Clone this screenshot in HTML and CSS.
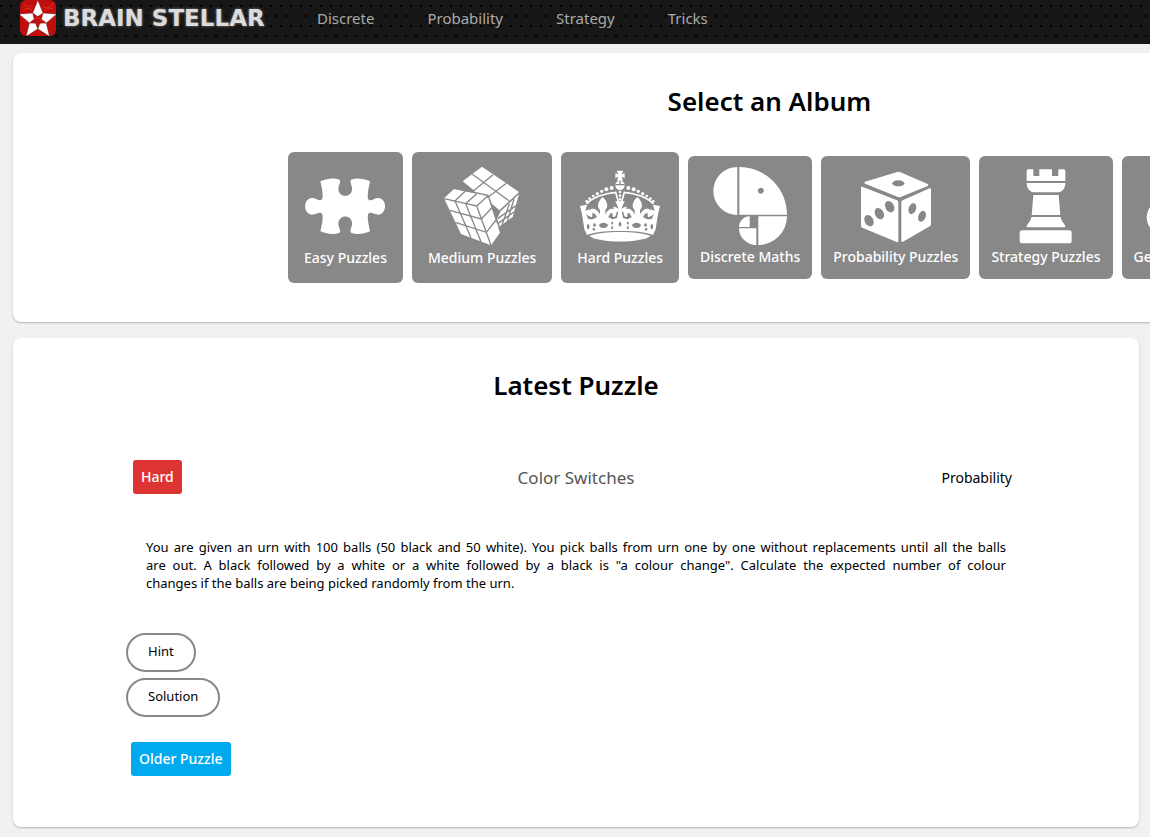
FILE: index.html
```html
<!DOCTYPE html>
<html lang="en">
<head>
    <meta charset="UTF-8">
    <meta name="viewport" content="width=device-width, initial-scale=1.0">
    <title>Brain Stellar</title>
    <link rel="stylesheet" href="styles.css">
</head>
<body>
    <header class="topbar">
        <a href="#" class="logo">
            <svg class="logo-icon" viewBox="60 3 105 105" aria-hidden="true">
                <rect x="60" y="3" width="105" height="105" rx="18" fill="#c00d0d"/>
                <path d="M72 14Q84 30 96 18M128 20Q140 34 158 14M70 32Q84 22 96 34M130 34Q146 22 156 30M100 60Q112 50 124 62T112 76" fill="none" stroke="#e32a20" stroke-width="3"/>
                <g fill="#fff" stroke="#5c0505" stroke-width="1">
                    <path id="ray" d="M112 4L127 41L112 51L97 41Z"/>
                    <use href="#ray" transform="rotate(72 112 62)"/>
                    <use href="#ray" transform="rotate(144 112 62)"/>
                    <use href="#ray" transform="rotate(216 112 62)"/>
                    <use href="#ray" transform="rotate(288 112 62)"/>
                </g>
            </svg>
            <span class="logo-text">BRAIN STELLAR</span>
        </a>
        <nav class="menu">
            <a href="#">Discrete</a>
            <a href="#">Probability</a>
            <a href="#">Strategy</a>
            <a href="#">Tricks</a>
        </nav>
    </header>

    <main>
        <div class="album-scroll">
            <section class="panel albums">
                <h2>Select an Album</h2>
                <div class="album-list">
                    <a href="#" class="album level">
                        <svg viewBox="78 62 240 240" aria-hidden="true">
                            <path d="M124 108C150 98 165 98 182 103C186 108 180 118 178 128C176 159 222 159 219 128C217 118 212 108 216 103C232 98 250 98 273 108C270 125 264 145 267 160C275 172 285 157 300 158C324 162 324 204 300 208C285 209 275 196 267 207C264 222 270 240 273 258C250 268 232 268 216 262C212 256 217 248 219 238C222 205 176 205 178 238C180 248 186 256 182 262C165 268 150 268 124 258C128 240 133 222 130 207C122 196 112 209 97 208C72 204 72 162 97 158C112 157 122 172 130 160C133 145 128 125 124 108Z"/>
                        </svg>
                        <span>Easy Puzzles</span>
                    </a>
                    <a href="#" class="album level">
                        <svg viewBox="488 62 240 240" aria-hidden="true">
                            <path d="M608 64L719 140L660 195L627 166L623 151L582 148L585 136L550 108Z"/>
                            <path d="M719 146L700 215L655 247L652 222L664 198Z"/>
                            <path d="M494 159L525 130L625 152L662 262L635 300L545 266Z"/>
                            <g class="cut">
                                <path d="M641 88L582 137M681 114L624 157M579 87L690 167M548 111L585 140"/>
                                <path d="M704 161L684 228M690 176L668 239M710 181L655 220M704 200L655 235"/>
                                <path d="M494 160L592 182L625 152M592 182L635 300"/>
                                <path d="M558 137L527 167L575 277M592 145L559 175L605 289"/>
                                <path d="M511 195L606 221L637 188M528 231L621 261L650 224"/>
                                <path d="M520 128L626 150L666 262"/>
                            </g>
                        </svg>
                        <span>Medium Puzzles</span>
                    </a>
                    <a href="#" class="album level">
                        <svg viewBox="78 62 240 240" aria-hidden="true">
                            <path d="M188 76H208L203 87L212 84V98L203 94L207 106H189L193 94L184 98V84L193 87Z"/>
                            <circle cx="198" cy="120" r="14"/>
                            <path class="cut" d="M184 118H212M198 118V107"/>
                            <circle cx="198" cy="140" r="4"/>
                            <circle cx="198" cy="151" r="4"/>
                            <circle cx="198" cy="162" r="4"/>
                            <path d="M184 168H212L202 190L217 183V207L203 198L209 226H187L193 198L179 207V183L194 190Z"/>
                            <g id="crown-half">
                                <path class="line" d="M98 176C112 158 150 144 185 141L193 169"/>
                                <circle cx="173" cy="128" r="6"/>
                                <circle cx="157" cy="132" r="6"/>
                                <circle cx="143" cy="138" r="5"/>
                                <circle cx="130" cy="145" r="5"/>
                                <circle cx="118" cy="152" r="4"/>
                                <circle cx="107" cy="160" r="4"/>
                                <circle cx="98" cy="168" r="4"/>
                                <path d="M78 182L99 178L94 196L107 192L106 214L96 205L104 225L90 230Z"/>
                                <path d="M146 155C128 172 130 186 138 194V226H154V194C162 186 164 172 146 155Z"/>
                                <path class="curl" d="M142 222C132 216 132 196 116 196C106 199 108 209 115 210M150 222C160 216 160 196 174 196C184 199 182 209 176 210"/>
                                <path fill-rule="evenodd" d="M84 205Q96 226 118 221Q134 210 146 216Q160 210 175 222L199 216V257C160 256 122 260 99 269L91 252ZM148 232a13 8 0 1 0 1 0ZM121 234a4 5 0 1 0 1 0ZM119 248a4 4 0 1 0 1 0ZM174 229a3 4 0 1 0 1 0ZM174 243a3 4 0 1 0 1 0ZM102 236a4 8 0 1 0 1 0Z"/>
                            </g>
                            <use href="#crown-half" transform="matrix(-1 0 0 1 396 0)"/>
                            <path fill="#888" d="M198 228L203 237L198 246L193 237Z"/>
                            <path d="M106 272C145 256 251 256 290 272C265 294 131 294 106 272Z"/>
                        </svg>
                        <span>Hard Puzzles</span>
                    </a>
                    <a href="#" class="album">
                        <svg viewBox="467 62 240 240" aria-hidden="true">
                            <path d="M549 65A72 72 0 0 0 549 209Z"/>
                            <path fill-rule="evenodd" d="M555 65A143 143 0 0 1 698 208H555ZM619 127a9 9 0 1 0 1 0Z"/>
                            <path d="M612 213H698A86 86 0 0 1 612 299Z"/>
                            <path d="M606 249H554A52 50 0 0 0 606 299Z"/>
                            <path d="M586 213V245H554A32 32 0 0 1 586 213Z"/>
                        </svg>
                        <span>Discrete Maths</span>
                    </a>
                    <a href="#" class="album">
                        <svg viewBox="122 62 240 240" aria-hidden="true">
                            <path d="M149 109L246 80Q250 78 254 80L337 116Q342 119 337 122L256 155Q252 157 248 155L149 115Q145 112 149 109Z"/>
                            <path d="M141 124L245 165Q249 167 249 171V287Q249 292 244 290L141 247Q137 245 137 241V127Q137 122 141 124Z"/>
                            <path d="M262 165L343 129Q347 127 347 132V237Q347 241 343 243L263 289Q258 291 258 286V171Q258 167 262 165Z"/>
                            <g fill="#888">
                                <ellipse cx="249" cy="114" rx="18" ry="9"/>
                                <ellipse cx="223" cy="184" rx="13" ry="18" transform="rotate(-28 223 184)"/>
                                <ellipse cx="192" cy="205" rx="13" ry="18" transform="rotate(-28 192 205)"/>
                                <ellipse cx="161" cy="226" rx="13" ry="18" transform="rotate(-28 161 226)"/>
                                <ellipse cx="291" cy="190" rx="11" ry="17" transform="rotate(20 291 190)"/>
                                <ellipse cx="320" cy="213" rx="11" ry="17" transform="rotate(20 320 213)"/>
                            </g>
                        </svg>
                        <span>Probability Puzzles</span>
                    </a>
                    <a href="#" class="album">
                        <svg viewBox="574 62 240 240" aria-hidden="true">
                            <path d="M636 77Q636 72 641 72H656V92H674V72H712V92H731V72H747Q752 72 752 77V107H636Z"/>
                            <path d="M636 113H752C752 130 742 141 728 141H660C646 141 636 130 636 113Z"/>
                            <path d="M656 149H732L737 209H651Z"/>
                            <path d="M650 215H738C740 230 752 235 752 246H636C636 235 648 230 650 215Z"/>
                            <rect x="615" y="255" width="156" height="39" rx="8"/>
                        </svg>
                        <span>Strategy Puzzles</span>
                    </a>
                    <a href="#" class="album">
                        <svg viewBox="984 62 240 240" aria-hidden="true">
                            <circle cx="1036" cy="216" r="50"/>
                            <circle cx="1172" cy="216" r="50"/>
                            <circle cx="1104" cy="122" r="50"/>
                        </svg>
                        <span>General Puzzles</span>
                    </a>
                </div>
            </section>
        </div>

        <section class="panel latest">
            <h2>Latest Puzzle</h2>
            <div class="puzzle-head">
                <div><a href="#" class="tag hard">Hard</a></div>
                <h3>Color Switches</h3>
                <a href="#" class="category">Probability</a>
            </div>
            <p>You are given an urn with 100 balls (50 black and 50 white). You pick balls from urn one by one without replacements until all the balls are&nbsp;out. A black followed by a white or a white followed by a black is "a colour change". Calculate the expected number of colour changes&nbsp;if&nbsp;the balls are being picked randomly from the urn.</p>
            <div class="reveal">
                <button type="button">Hint</button>
                <button type="button">Solution</button>
            </div>
            <a href="#" class="tag older">Older Puzzle</a>
        </section>
    </main>
</body>
</html>
```
FILE: styles.css
```css
* {
    box-sizing: border-box;
}

body {
    margin: 0;
    background-color: #f1f1f1;
    color: #000;
    font-family: "Noto Sans", "Open Sans", sans-serif;
    font-size: 14px;
}

a {
    color: inherit;
    text-decoration: none;
}

/* top bar */
.topbar {
    display: flex;
    align-items: center;
    gap: 46px;
    height: 44px;
    padding: 0 20px 8px;
    background-color: #171717;
    background-image:
        conic-gradient(from 270deg at 2px 2px, #000 90deg, transparent 0),
        conic-gradient(from 270deg at 2px 2px, #000 90deg, transparent 0);
    background-size: 10px 20px;
    background-position: 0 5px, 5px 15px;
}

.logo {
    display: flex;
    align-items: center;
    gap: 7px;
    min-width: 251px;
}

.logo-icon {
    width: 36px;
    height: 36px;
}

.logo-text {
    color: #dcdcdc;
    font-family: "DejaVu Sans", sans-serif;
    font-size: 23px;
    font-weight: bold;
    line-height: 36px;
    text-shadow: 0 0 3px #888;
    white-space: nowrap;
}

.menu {
    display: flex;
    gap: 53px;
    color: #aaa;
    font-size: 15px;
}

.menu a:hover {
    color: #fff;
}

/* panels */
.panel {
    background-color: #fff;
    border-radius: 8px;
    box-shadow: 0 1px 2px rgba(0, 0, 0, 0.25);
}

h2 {
    margin: 0;
    font-size: 26px;
    font-weight: 600;
    line-height: 38px;
    text-align: center;
}

/* albums, the row runs past the window on small screens */
.album-scroll {
    overflow-x: auto;
    scrollbar-width: none;
    padding: 9px 11px 8px 13px;
}

.albums {
    width: max-content;
    min-width: 100%;
    padding: 29px 270px 39px 275px;
}

.album-list {
    display: flex;
    justify-content: center;
    align-items: center;
    gap: 9px;
    margin-top: 32px;
}

.album {
    padding: 10px 12px 11px;
    border-radius: 6px;
    background-color: #888;
    color: #fff;
    font-weight: 500;
    line-height: 22px;
    text-align: center;
}

.level {
    padding: 14px 16px 13px;
    line-height: 24px;
}

.album:hover {
    background-color: #666;
}

.album svg {
    display: block;
    width: 80px;
    height: 80px;
    margin: 0 auto;
    fill: #fff;
}

.album span {
    display: block;
}

.album .cut {
    fill: none;
    stroke: #888;
    stroke-width: 4;
}

.album .line {
    fill: none;
    stroke: #fff;
    stroke-width: 5;
}

.album .curl {
    fill: none;
    stroke: #fff;
    stroke-width: 12;
}

/* latest puzzle */
.latest {
    margin: 8px 11px 10px 13px;
    padding: 28px 113px 51px;
}

.puzzle-head {
    display: grid;
    grid-template-columns: 1fr auto 1fr;
    align-items: center;
    margin: 56px 7px 44px;
}

.puzzle-head h3 {
    margin: 0;
    color: #555;
    font-size: 17px;
    font-weight: normal;
}

.category {
    padding-right: 7px;
    text-align: right;
}

.tag {
    display: inline-block;
    padding: 0 8px;
    border-radius: 3px;
    color: #fff;
    font-weight: 500;
    line-height: 34px;
}

.hard {
    background-color: #dd3333;
}

.older {
    margin: 25px 5px 0;
    background-color: #00aaee;
}

.latest p {
    margin: 0 20px 41px;
    font-size: 13px;
    line-height: 18px;
    text-align: justify;
}

.reveal {
    display: flex;
    flex-direction: column;
    align-items: flex-start;
    gap: 6px;
}

.reveal button {
    height: 39px;
    padding: 0 20px 3px;
    border: 2px solid #888;
    border-radius: 20px;
    background-color: #fff;
    color: #000;
    font-family: inherit;
    font-size: 13px;
    cursor: pointer;
}

.reveal button:hover {
    background-color: #eee;
}
```
